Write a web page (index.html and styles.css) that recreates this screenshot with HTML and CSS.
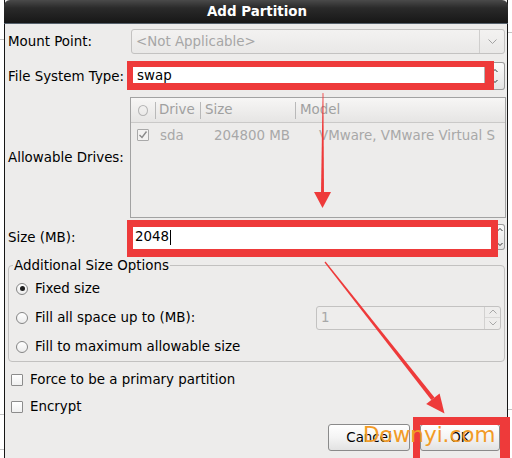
FILE: index.html
```html
<!DOCTYPE html>
<html>
<head>
<meta charset="utf-8">
<link rel="stylesheet" href="styles.css">
</head>
<body>
<div class="dialog">
  <div class="titlebar">Add Partition</div>
  <div class="content">
    <div class="row r-mount">
      <span class="lbl">Mount Point:</span>
      <div class="combo-dis">
        <span class="combo-txt">&lt;Not Applicable&gt;</span>
        <span class="combo-arrow"><svg width="9" height="5" viewBox="0 0 9 5"><polyline points="0.5,0.5 4.5,4.5 8.5,0.5" fill="none" stroke="#a3a3a3" stroke-width="1"/></svg></span>
      </div>
    </div>
    <div class="row r-fs">
      <span class="lbl">File System Type:</span>
      <div class="fs-combo">
        <div class="fs-entry">swap</div>
        <div class="fs-btn"><svg width="6" height="16" viewBox="0 0 6 16"><polyline points="0.5,4 3,1.5 5.5,4" fill="none" stroke="#333" stroke-width="1"/><polyline points="0.5,12 3,14.5 5.5,12" fill="none" stroke="#333" stroke-width="1"/></svg></div>
      </div>
    </div>
    <div class="row r-drives">
      <span class="lbl">Allowable Drives:</span>
      <div class="tree">
        <div class="tree-head">
          <div class="c1"><span class="hcircle"></span></div>
          <div class="c2 sep">Drive</div>
          <div class="c3 sep">Size</div>
          <div class="c4 sep">Model</div>
        </div>
        <div class="tree-row">
          <div class="c1"><span class="cb cb-dis"><svg width="10" height="10" viewBox="0 0 10 10"><polyline points="1.5,5 4,7.5 8.5,1.5" fill="none" stroke="#8a8a8a" stroke-width="1.4"/></svg></span></div>
          <div class="c2 cell">sda</div>
          <div class="c3 cell cell-size">204800 MB</div>
          <div class="c4 cell cell-model">VMware, VMware Virtual S</div>
        </div>
      </div>
    </div>
    <div class="row r-size">
      <span class="lbl">Size (MB):</span>
      <div class="spin">
        <div class="spin-entry">2048<span class="caret"></span></div>
        <div class="spin-btns"><svg width="6" height="24" viewBox="0 0 6 24"><polyline points="0.5,6 3,3.5 5.5,6" fill="none" stroke="#333" stroke-width="1"/><polyline points="0.5,18 3,20.5 5.5,18" fill="none" stroke="#333" stroke-width="1"/></svg></div>
      </div>
    </div>
    <div class="frame">
      <span class="frame-label">Additional Size Options</span>
      <div class="radios">
        <div class="opt"><span class="radio on"></span>Fixed size</div>
        <div class="opt"><span class="radio"></span>Fill all space up to (MB):
          <div class="spin-dis">
            <span class="spin-dis-txt">1</span>
            <span class="spin-dis-btns">
              <span class="sd-up"><svg width="8" height="5" viewBox="0 0 8 5"><polyline points="0.5,4.5 4,1 7.5,4.5" fill="none" stroke="#a8a8a8" stroke-width="1"/></svg></span>
              <span class="sd-down"><svg width="8" height="5" viewBox="0 0 8 5"><polyline points="0.5,0.5 4,4 7.5,0.5" fill="none" stroke="#a8a8a8" stroke-width="1"/></svg></span>
            </span>
          </div>
        </div>
        <div class="opt"><span class="radio"></span>Fill to maximum allowable size</div>
      </div>
    </div>
    <div class="check-row first"><span class="cb"></span>Force to be a primary partition</div>
    <div class="check-row"><span class="cb"></span>Encrypt</div>
    <div class="buttons">
      <button class="btn btn-cancel">Cancel</button>
      <button class="btn btn-ok">OK</button>
    </div>
  </div>
</div>

<div class="mark mark-fs"></div>
<div class="mark mark-size"></div>
<div class="mark mark-ok"></div>

<svg class="arrows" width="512" height="458" viewBox="0 0 512 458">
  <polygon points="322.6,93 323.4,93 324,193 321,193" fill="#ee3a3a"/>
  <polygon points="314,192 331,192 322.5,208" fill="#ee3a3a"/>
  <polygon points="325.5,261.6 324.5,262.4 431.3,400 434.5,397.6" fill="#ee3a3a"/>
  <polygon points="439.6,393.5 426.2,404.1 444.5,413.5" fill="#ee3a3a"/>
</svg>

<div class="wm">Downyi.com</div>
</body>
</html>
```

FILE: styles.css
```css
html, body {
  margin: 0;
}
body {
  width: 512px;
  height: 458px;
  overflow: hidden;
  position: relative;
  font-family: "DejaVu Sans", "Noto Sans", sans-serif;
  font-size: 13.4px;
  color: #000;
  background:
    linear-gradient(#c4c4c4, #c4c4c4) 0 39px / 4px 1px no-repeat,
    linear-gradient(#c4c4c4, #c4c4c4) 0 414px / 4px 1px no-repeat,
    linear-gradient(#c4c4c4, #c4c4c4) 0 449px / 4px 1px no-repeat,
    linear-gradient(#c4c4c4, #c4c4c4) 508px 32px / 4px 1px no-repeat,
    linear-gradient(#c4c4c4, #c4c4c4) 508px 409px / 4px 1px no-repeat,
    #ffffff;
}

.dialog {
  margin-left: 4px;
  width: 504px;
  height: 458px;
  box-sizing: border-box;
  border-left: 1px solid #161616;
  border-right: 1px solid #161616;
  background: #edeceb;
}

.titlebar {
  margin: 0 -1px;
  height: 23px;
  line-height: 23px;
  border-bottom: 1px solid #56616c;
  border-radius: 6px 6px 0 0;
  background: linear-gradient(#4a4a4a, #2a2a2a 35%, #171717);
  color: #fff;
  font-weight: bold;
  text-align: center;
  padding-left: 2px;
}

.content {
  padding: 5px 2px 0 3px;
}

.row {
  display: flex;
  align-items: center;
}
.lbl {
  width: 123px;
  flex: none;
  white-space: nowrap;
}

/* Mount point */
.r-mount { height: 25px; }
.combo-dis {
  flex: 1;
  height: 25px;
  box-sizing: border-box;
  border: 1px solid #c3c2c1;
  border-radius: 3px;
  background: linear-gradient(#f3f2f1, #e9e8e7);
  display: flex;
  align-items: center;
  color: #a6a6a6;
}
.combo-txt {
  flex: 1;
  padding-left: 4px;
}
.combo-arrow {
  width: 25px;
  box-sizing: border-box;
  align-self: stretch;
  border-left: 1px solid #cfcecd;
  display: flex;
  align-items: center;
  justify-content: center;
}
.combo-arrow svg { display: block; }

/* File system */
.r-fs { margin-top: 8px; height: 28px; }
.fs-combo {
  flex: 1;
  display: flex;
  height: 28px;
}
.fs-entry {
  flex: 1;
  box-sizing: border-box;
  background: #fff;
  border: 1px solid #8e8e8e;
  border-right-color: #b3b3b3;
  padding-left: 5px;
  line-height: 26px;
}
.fs-btn {
  width: 20px;
  box-sizing: border-box;
  border: 1px solid #9b9b9b;
  border-left: none;
  border-radius: 0 3px 3px 0;
  background: linear-gradient(#fbfbfb, #e4e4e4);
  display: flex;
  align-items: center;
  justify-content: center;
}
.fs-btn svg { display: block; }

/* Drives */
.r-drives { margin-top: 7px; height: 121px; }
.tree {
  flex: 1;
  margin: 0 -1px;
  height: 121px;
  box-sizing: border-box;
  border: 1px solid #a2a2a2;
  background: #edeceb;
}
.tree-head {
  display: flex;
  height: 24px;
  border-bottom: 1px solid #cac9c8;
  background: linear-gradient(#f7f6f5, #e6e5e4);
  color: #a0a0a0;
  align-items: center;
}
.tree-head > div {
  height: 24px;
  line-height: 24px;
  box-sizing: border-box;
}
.c1 { width: 24px; flex: none; }
.c2 { width: 45px; flex: none; }
.c3 { width: 95px; flex: none; }
.c4 { flex: 1; min-width: 0; }
.tree-head .sep {
  padding-left: 4px;
  background: linear-gradient(#b9b9b9, #b9b9b9) 0 50% / 1px 17px no-repeat;
}
.tree-head .c3, .tree-head .c4 { padding-left: 5px; }
.tree-head .c1 {
  display: flex;
  align-items: center;
  padding-left: 7px;
}
.hcircle {
  width: 10px;
  height: 11px;
  box-sizing: border-box;
  border: 1px solid #b4b4b4;
  border-radius: 50%;
}
.tree-row {
  display: flex;
  height: 24px;
  align-items: center;
  color: #a8a8a8;
}
.tree-row .c1 {
  display: flex;
  align-items: center;
  padding-left: 6px;
  box-sizing: border-box;
}
.cell { white-space: nowrap; overflow: hidden; }
.tree-row .c2 { padding-left: 5px; box-sizing: border-box; }
.cell-size { text-align: right; padding-right: 5px; box-sizing: border-box; }
.cell-model { padding-left: 24px; }

.cb {
  width: 12px;
  height: 12px;
  box-sizing: border-box;
  border: 1px solid #8c8c8c;
  border-radius: 1px;
  background: linear-gradient(#ffffff, #f0f0f0);
  flex: none;
  display: flex;
  align-items: center;
  justify-content: center;
}
.cb-dis {
  border-color: #a9a9a9;
  background: #f3f2f1;
}
.cb svg { display: block; }

/* Size */
.r-size { margin-top: 6px; height: 26px; }
.spin {
  flex: 1;
  display: flex;
  height: 26px;
}
.spin-entry {
  flex: 1;
  box-sizing: border-box;
  background: #fff;
  border: 1px solid #8e8e8e;
  padding-left: 3px;
  line-height: 24px;
  display: flex;
  align-items: center;
}
.caret {
  display: inline-block;
  width: 1px;
  height: 15px;
  background: #000;
  margin-left: 1px;
}
.spin-btns {
  width: 9px;
  box-sizing: border-box;
  border: 1px solid #9b9b9b;
  border-left: none;
  border-radius: 0 3px 3px 0;
  background: linear-gradient(#fbfbfb, #e4e4e4);
  display: flex;
  align-items: center;
  justify-content: center;
  overflow: hidden;
}
.spin-btns svg { display: block; }

/* Frame */
.frame {
  margin-top: 15px;
  height: 97px;
  box-sizing: border-box;
  border: 1px solid #c2c1c0;
  border-radius: 4px;
}
.frame-label {
  display: block;
  width: max-content;
  margin: -8px 0 0 4px;
  padding: 0 1px;
  line-height: 15px;
  background: #edeceb;
}
.radios {
  padding: 1px 3px 0 7px;
}
.opt {
  height: 29px;
  display: flex;
  align-items: center;
  white-space: nowrap;
}
.radio {
  width: 12px;
  height: 12px;
  box-sizing: border-box;
  border: 1px solid #858585;
  border-radius: 50%;
  background: linear-gradient(#ffffff, #ececec);
  margin-right: 7px;
  flex: none;
  display: flex;
  align-items: center;
  justify-content: center;
}
.radio.on::after {
  content: "";
  width: 5px;
  height: 5px;
  border-radius: 50%;
  background: #1e1e1e;
}
.spin-dis {
  margin-left: auto;
  width: 185px;
  height: 24px;
  box-sizing: border-box;
  border: 1px solid #c3c2c1;
  border-radius: 3px;
  background: #eeedec;
  display: flex;
  color: #a8a8a8;
}
.spin-dis-txt {
  flex: 1;
  padding-left: 4px;
  line-height: 22px;
}
.spin-dis-btns {
  width: 16px;
  box-sizing: border-box;
  border-left: 1px solid #d2d1d0;
  display: flex;
  flex-direction: column;
}
.sd-up, .sd-down {
  flex: 1;
  display: flex;
  align-items: center;
  justify-content: center;
}
.sd-up { border-bottom: 1px solid #dad9d8; }
.spin-dis svg { display: block; }

/* Checkboxes */
.check-row {
  height: 27px;
  display: flex;
  align-items: center;
  padding-left: 3px;
}
.check-row.first { margin-top: 4px; }
.check-row .cb { margin-right: 7px; }

/* Buttons */
.buttons {
  display: flex;
  justify-content: flex-end;
  gap: 10px;
  margin-top: 4px;
  padding-right: 5px;
}
.btn {
  height: 27px;
  box-sizing: border-box;
  border: 1px solid #8a8a8a;
  border-radius: 3px;
  background: linear-gradient(#ffffff, #f4f4f4 50%, #e2e2e2);
  font-family: "DejaVu Sans", sans-serif;
  font-size: 13.4px;
  color: #000;
  padding: 0;
}
.btn-cancel { width: 82px; }
.btn-ok { width: 80px; }

/* Overlays */
.mark {
  position: absolute;
  box-sizing: border-box;
  border-style: solid;
  border-color: #ee3a3a;
}
.mark-fs {
  left: 127px;
  top: 61px;
  width: 367px;
  height: 29px;
  border-width: 6px 9px 7px 6px;
}
.mark-size {
  left: 127px;
  top: 220px;
  width: 371px;
  height: 37px;
  border-width: 7px 7px 8px 6px;
}
.mark-ok {
  left: 413px;
  top: 417px;
  width: 97px;
  height: 50px;
  border-width: 8px 10px 7px 7px;
}
.arrows {
  position: absolute;
  left: 0;
  top: 0;
  pointer-events: none;
}
.wm {
  position: absolute;
  left: 363px;
  top: 424px;
  font-family: "DejaVu Sans", sans-serif;
  font-size: 21.5px;
  line-height: 1;
  color: #f29b26;
  white-space: nowrap;
}
```
